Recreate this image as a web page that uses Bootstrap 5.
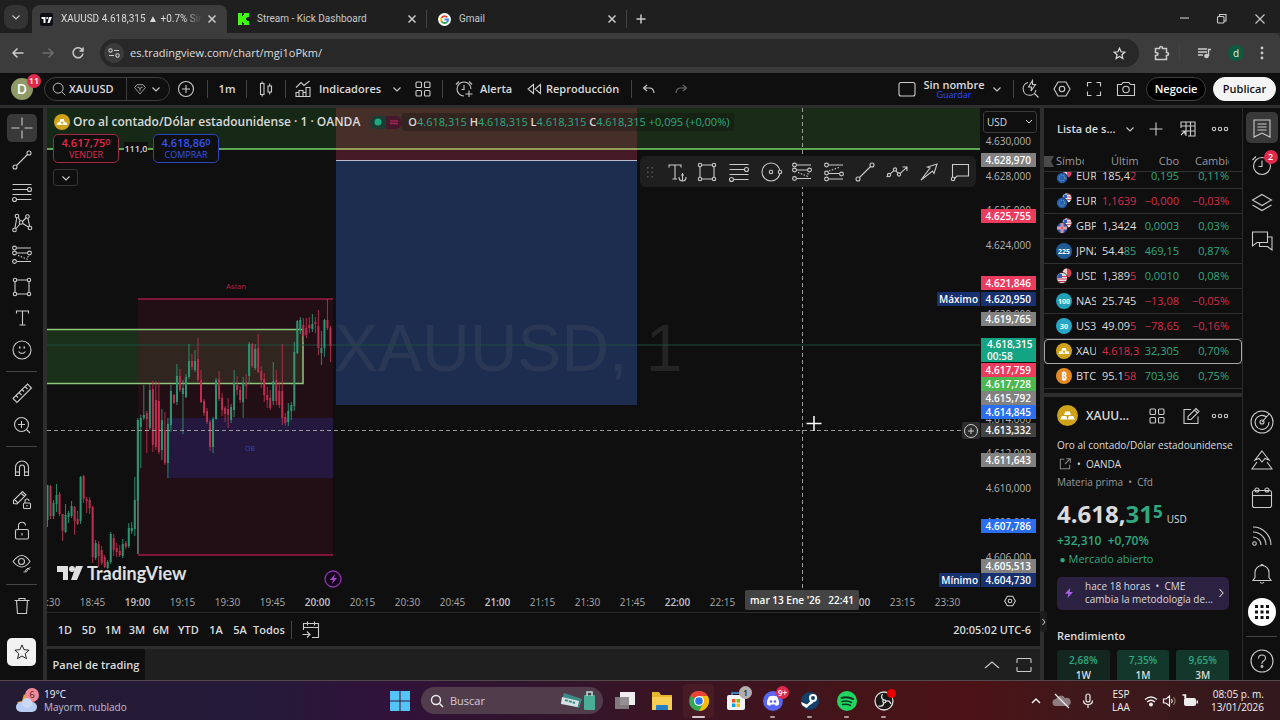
<!DOCTYPE html>
<html lang="es">
<head>
<meta charset="utf-8">
<meta name="viewport" content="width=device-width, initial-scale=1">
<title>XAUUSD 4.618,315 ▲ +0.7% Sin nombre</title>
<link href="https://cdn.jsdelivr.net/npm/bootstrap@5.3.0/dist/css/bootstrap.min.css" rel="stylesheet">
<style>
:root{--bg:#0f0f0f;--gap:#2e2e2e;--line:#2b2b2b;--tx:#dbdbdb;--up:#2fa880;--dn:#d92b4b}
body{font-family:"Open Sans","Noto Sans",sans-serif;font-size:11px;line-height:16px;color:var(--tx);background:var(--gap);height:100vh;overflow:hidden}
button,select,input{font:inherit;color:inherit}
svg{display:block;flex:none}
svg.ic{width:24px;height:24px;fill:none;stroke:#cbcbcb;stroke-width:1.1}
svg.ic20{width:20px}svg.ic14{width:14px}svg.ic16{width:16px}
.muted svg.ic{stroke:#6c6c6c}
.ib,.tb{background:none;border:0;padding:0;display:inline-flex;align-items:center;justify-content:center;flex:none}
.ib{width:32px;height:28px}
.w18{width:18px}.w24{width:24px}.w28{width:28px}.w36{width:36px}.w40{width:40px}.w60{width:60px}
.h22{height:22px}
.vr1{width:1px;height:18px;background:#444;margin:0 5px;flex:none}
a{color:inherit;text-decoration:none}
.fs10{font-size:10px}.fs12{font-size:12px}
/* browser */
.tabs{height:33px;background:#1f1f1f;font-family:Roboto,sans-serif;font-size:10px}
.tabs .tab1{width:195px;height:28px;background:#3c3c3c;border-radius:8px 8px 0 0;padding-left:8px}
.tabs .tab2{width:200px;height:28px;padding-left:11px;color:#c9c9c9}
.tabs .fade1{width:145px;overflow:hidden;white-space:nowrap;-webkit-mask-image:linear-gradient(90deg,#000 88%,transparent)}
.drop{width:24px;height:24px;border-radius:8px;background:#343434}
.x{width:20px;height:20px}
.addr{height:40px;background:#3c3c3c;border-top-right-radius:6px}
.omni{height:28px;border-radius:14px;background:#282828;padding:0 8px 0 4px}
.omni input{background:none;border:0;outline:0;font-size:11px;min-width:0;padding:0;color:#dedede}
.siteinfo{width:20px;height:20px;border-radius:50%;background:#3b3b3b;margin-right:6px}
.user{width:16px;height:16px;border-radius:50%;background:#0c5a40;font-size:10px;color:#e6efe9}
/* top toolbar */
.tvbar{height:32px;background:var(--bg);font-weight:600}
.avatarbox{width:44px}
.avatarD{width:22px;height:22px;border-radius:50%;background:#8f9a66;font-size:14px;color:#fff}
.cnt{position:absolute;background:#e0294b;color:#fff;border-radius:8px;font-size:9px;line-height:14px;height:14px;width:14px;text-align:center;font-weight:600}
.avatarbox .cnt{left:27px;top:-4px}
.rrail .cnt{right:0;top:4px}
.pill{width:126px;height:24px;border:1px solid #3f3f3f;border-radius:12px}
.pill .sym{width:82px;height:22px;border-right:1px solid #3f3f3f;padding-left:4px;justify-content:flex-start}
.tb.t-ind{width:94px;justify-content:start}.tb.t-al{width:74px;justify-content:start}.tb.t-rep{width:104px;justify-content:start}
.btn-neg,.btn-pub{height:24px;border-radius:12px;border:1px solid #3f3f3f;background:#000;color:#fff;width:60px;padding:0;font-weight:600}
.btn-pub{background:#f4f4f4;color:#111;width:63px;border-color:#f4f4f4;margin-left:7px}
.lname{width:62px}
.save{font-size:9px;line-height:9px;color:#2e4cff;font-weight:400}
/* columns */
main{min-height:0;padding-top:3px}
.mid,.plotrow{min-width:0;min-height:0}
.rail{width:43px;background:var(--bg);padding-top:4px}
.grp{display:flex;flex-direction:column;align-items:center}
.grp .ib{flex:1 1 0;width:30px}
.g8{height:254px}.g2{height:64px}.g4{height:127px}
.hr1{height:1px;width:31px;background:#444;margin:5px auto;flex:none}
.on{background:#393939;border-radius:5px}
.rail .on{flex:none;height:28px;margin:2px 0}
.grp .binbtn{flex:none;height:31px}
.grp .starbtn{flex:none;width:29px;height:28px;background:#f2f2f2;border-radius:5px;margin-top:17px}
.starbtn svg.ic{stroke:#111}
.rrail{width:38px;background:var(--bg);border-left:1px solid var(--line);padding-top:4px}
.rrail .ib{width:32px;height:38px;position:relative}
.rrail svg{overflow:visible}
.rrail .on{height:31px;margin-bottom:3px}
.rgap{height:147px}
.apps{width:28px;height:28px;border-radius:50%;background:#fff}
.chart{background:var(--bg);position:relative;overflow:hidden}
.chart>svg{position:absolute;left:0;top:0}
.legend{position:absolute;left:7px;top:4px;height:20px;white-space:nowrap}
.legend h1{font-size:12px;line-height:16px;font-weight:600;margin:0 0 0 3px}
.status{width:32px;height:13px;border-radius:6px;margin-left:10px;background:linear-gradient(90deg,#1c3b33 50%,#46182b 50%)}
.ohlc{font-size:11px;line-height:18px;padding:0 5px 0 6px;color:var(--up);background:#0f0f0f55;border-radius:3px}
.ohlc b{color:var(--tx);font-weight:600}
.trade{position:absolute;left:6px;top:26px}
.trade button{width:66px;height:29px;border-radius:5px;background:var(--bg);border:1px solid #a32842;color:#e0294b;font-size:9px;line-height:11px;padding:0}
.trade button b{font-size:11px;font-weight:600;display:block;line-height:12px}
.trade sup{font-size:9px;top:-2px;line-height:0}
.trade .buy{border-color:#2b45c0;color:#3454f0}
.spread{width:34px;text-align:center;font-size:9px;font-weight:600}
.spread span{background:var(--bg)}
.coll{position:absolute;left:6px;top:61px;width:25px;height:17px;border:1px solid #363636;border-radius:3px}
.fav{position:absolute;right:4px;top:48px;height:31px;width:336px;background:#1f1f1f;border-radius:6px}
.fav .ib{flex:1}
.brand{position:absolute;left:10px;bottom:7px;font:700 18px/20px Lato,sans-serif;color:#e0e0e0}
.paxis{width:60px;background:var(--bg);position:relative;font-size:10px;line-height:14px}
.paxis select{width:54px;height:22px;border:1px solid #3a3a3a;border-radius:3px;background:var(--bg) url("data:image/svg+xml,%3Csvg xmlns='http://www.w3.org/2000/svg' width='8' height='6' fill='none' stroke='%23ddd'%3E%3Cpath d='M1 1l3 3 3-3'/%3E%3C/svg%3E") no-repeat right 3px center;appearance:none;font-size:10px;padding:0 3px;margin:3px 0 0 3px}
.pl{position:absolute;left:1px;width:55px;padding-right:5px;text-align:right;transform:translateY(-50%);color:#b5b5b5}
.pl.tag{color:#fff;font-weight:600}
.pl .lab{position:absolute;right:56px;top:0;padding:0 2px;background:inherit}
.red{background:#ec3b5f}.gry{background:#818181}.navy{background:#17306f}.grn{background:#4bb84f}.blu{background:#2b6ff0}.dark{background:#434343}
.pl.teal{background:#12a483;line-height:12px;text-align:left;padding:0 0 0 6px}
.taxis{height:23px;background:var(--bg);border-bottom:1px solid var(--line);position:relative;font-size:10px;color:#a8a8a8}
.taxis .ticks{overflow:hidden;padding-top:4px}
.taxis .ticks span{width:45px;flex:none;text-align:center}
.taxis .ticks span:first-child{margin-left:-22px}
.taxis .ticks b{font-weight:600;color:#c4c4c4}
.taxis svg{stroke:#ccc;stroke-width:1.6;fill:none}
.when{position:absolute;left:698px;top:0;width:114px;height:20px;line-height:20px;background:#434343;border-radius:2px;color:#fff;font-weight:600;text-align:center;white-space:pre}
.range{height:33px;background:var(--bg);font-weight:600;padding-left:6px}
.range .tb{height:24px;width:24px}.range .tb:nth-child(6){width:31px}.range .tb:nth-child(9){width:34px}
.clock{padding-right:9px}
.panelbar{background:#1f1f1f;margin-top:3px;height:31px}
.panelbar .ptab{width:98px;background:var(--bg);font-weight:600}
.watch{width:198px}
.watch .hd{height:42px;background:var(--bg);padding-left:13px;font-weight:600}
.watch .ttl{width:61px}
.watch .bd{background:var(--bg)}
.watch table{table-layout:fixed;width:198px;margin:0;border-collapse:collapse}
.watch td,.watch th{padding:0;height:25px;overflow:hidden;white-space:nowrap;border-bottom:1px solid #303030;line-height:18px}
.watch th{height:21px;font-weight:400;color:#9a9a9a;padding-top:2px}
.watch th.c2{padding-left:27px}.watch th.c4{padding-left:16px}
.a1{width:12px}.a2{width:28px}.a3{width:54px}.a4{width:41px}.a5{width:50px}
.b1{width:32px}.b2{width:20px}.b3{width:43px}.b4{width:40px}.b5{width:50px}
.watch td:first-child{padding-left:12px}.watch td:nth-child(3){padding-left:6px}
.watch td i{font-style:normal}
.tblclip{overflow:hidden;height:221px}
.tblclip table{margin-top:-8px}
.r{text-align:right}.u{color:var(--up)}.d{color:var(--dn)}
.sel{outline:1px solid #a8a8a8;outline-offset:-1px;border-radius:4px}
.det{background:var(--bg);margin-top:4px;padding:8px 13px 0;overflow:hidden}
.det .nm{font-weight:600;font-size:12px}
.det .ds{margin-top:10px}.det .src{margin-top:3px}.det .knd{margin-top:2px;color:#9a9a9a}
.big{font-size:24px;line-height:28px;font-weight:700;margin-top:10px}
.big sup{font-size:17px;top:-5px;line-height:0}
.big small{font-size:10px;font-weight:400}
.chg{font-weight:600;font-size:12px}
.mkt{margin-top:2px}
.news{background:#2b2140;border-radius:5px;height:33px;line-height:13px;font-size:10px;padding:0 4px;margin-top:10px}
.det h2{font-size:11px;line-height:16px;font-weight:600;margin:18px 0 6px}
.perfs{gap:7px}
.perf{height:40px;border-radius:3px;background:#14372c;text-align:center;font-size:10px;line-height:15px;padding-top:3px;font-weight:600}
.perf.lo{background:#142620}
.hide{position:absolute;left:-4px;bottom:48px;width:7px;height:21px;background:#1c1c1c;border-radius:3px}
/* task bar */
.task{height:40px;border-top:1px solid #54484c;background:linear-gradient(90deg,#231c33 0,#26193a 22%,#31123a 30%,#30152c 42%,#3a1424 52%,#451418 68%,#4c1216 76%,#40181b 84%,#32191d 100%);color:#f1f1f1}
.task .left1{width:30%}
.task svg.ic{stroke:#eee}
.two{font-size:10px;line-height:13px}.two span{color:#c4bccb}
.lang{width:38px}.time{width:64px}
.approw{gap:6px}
.task .search{width:182px;height:27px;border-radius:14px;background:#513c4c;padding:0 6px 0 8px}
.task .search input{background:none;border:0;outline:0;width:90px;font-size:11px;padding:0;margin-left:5px}
.task .search input::placeholder{color:#d5cdd3;opacity:1}
.app{width:31px;height:34px;background:none;border:0;padding:0;display:flex;align-items:center;justify-content:center;position:relative;border-radius:4px}
.app.run::after{content:"";position:absolute;bottom:0;width:5px;height:2px;border-radius:1px;background:#a99}
.app.act{background:#54222a80}.app.act::after{width:13px;background:#d8c8cc}
.app .cnt{right:-1px;top:2px;width:13px;height:13px;line-height:13px;font-size:8px}
.app .one{background:#b3aeb0;color:#222}
.app .rec{background:#e80000;width:9px;height:9px;right:3px;top:5px}
</style>
</head>
<body class="d-flex flex-column">
<svg width="0" height="0" class="position-absolute" aria-hidden="true">
<defs>
<symbol id="chev" viewBox="0 0 24 24"><path d="M8.500 10.500l3.500 3.500 3.500-3.500"/></symbol>
<symbol id="x" viewBox="0 0 24 24"><path d="M8.500 8.500l7 7M15.500 8.500l-7 7" stroke-width="1.500"/></symbol>
<symbol id="plus" viewBox="0 0 24 24"><path d="M12 5.500v13M5.500 12h13"/></symbol>
<symbol id="mag" viewBox="0 0 24 24"><circle cx="11" cy="11" r="6"/><path d="M15.500 15.500l4 4"/></symbol>
<symbol id="pc" viewBox="0 0 24 24"><circle cx="12" cy="12" r="7.500"/><path d="M12 8v8M8 12h8"/></symbol>
<symbol id="dots3" viewBox="0 0 24 24"><circle cx="6" cy="12" r="1.700"/><circle cx="12" cy="12" r="1.700"/><circle cx="18" cy="12" r="1.700"/></symbol>
<symbol id="grid4" viewBox="0 0 24 24"><rect x="5" y="5" width="5.500" height="5.500" rx="1"/><rect x="13.500" y="5" width="5.500" height="5.500" rx="1"/><rect x="5" y="13.500" width="5.500" height="5.500" rx="1"/><rect x="13.500" y="13.500" width="5.500" height="5.500" rx="1"/></symbol>
<symbol id="line" viewBox="0 0 24 24"><circle cx="5" cy="19" r="2"/><circle cx="19" cy="5" r="2"/><path d="M6.500 17.500l11-11"/></symbol>
<symbol id="fib" viewBox="0 0 24 24"><path d="M2.500 4.500h19M2.500 9.500h15M2.500 14.500h19M6.500 19.500h15"/><circle cx="19.500" cy="9.500" r="2" /><circle cx="4.500" cy="19.500" r="2"/></symbol>
<symbol id="pat" viewBox="0 0 24 24"><circle cx="7" cy="5" r="1.800"/><circle cx="17.500" cy="5.500" r="1.800"/><circle cx="4.500" cy="19" r="1.800"/><circle cx="20" cy="17" r="1.800"/><circle cx="11" cy="11.500" r="1.800"/><path d="M6.700 7L5 17M8.300 6.500l2 3.500M12.500 10.500l4-4M17.900 7.300l1.800 8M6 17.500l4-4.500M12.700 12.500l5.700 3.500"/></symbol>
<symbol id="fc" viewBox="0 0 24 24"><circle cx="4.500" cy="5" r="1.900"/><circle cx="4.500" cy="10" r="1.900"/><circle cx="19.500" cy="10" r="1.900"/><circle cx="4.500" cy="18.500" r="1.900"/><path d="M6.500 5h14.500M6.500 10h11M6.500 18.500h14.500"/><path d="M8 12.500l10 4M18 13v3" stroke-dasharray="1.500 1.500"/></symbol>
<symbol id="fc2" viewBox="0 0 24 24"><circle cx="4.500" cy="5" r="1.900"/><circle cx="19.500" cy="14" r="1.900"/><circle cx="4.500" cy="13" r="1.900"/><circle cx="4.500" cy="19" r="1.900"/><path d="M6.500 5h14.500M6.500 13.500h11M6.500 19h14.500"/><path d="M7 11l11-4" stroke-dasharray="1.500 1.500"/></symbol>
<symbol id="rect" viewBox="0 0 24 24"><path d="M6.500 5h11M6.500 19h11M5 6.500v11M19 6.500v11"/><circle cx="5" cy="5" r="1.700"/><circle cx="19" cy="5" r="1.700"/><circle cx="5" cy="19" r="1.700"/><circle cx="19" cy="19" r="1.700"/></symbol>
<symbol id="txt" viewBox="0 0 24 24"><path d="M6.500 7.500v-2.500h12v2.500M12.500 5v14M9.500 19h6"/></symbol>
<symbol id="smile" viewBox="0 0 24 24"><circle cx="12" cy="12" r="9"/><path d="M8.500 13.500q3.500 4 7 0"/><path d="M9 9.500h1.500M13.500 9.500h1.500" stroke-width="1.800"/></symbol>
<symbol id="ruler" viewBox="0 0 24 24"><path d="M3 17.500L17.500 3l4 4L7 21.500zM6 14.500l2 2M9 11.500l2.500 2.500M12 8.500l2 2M15 5.500l2.500 2.500"/></symbol>
<symbol id="zoom" viewBox="0 0 24 24"><circle cx="11.500" cy="11.500" r="7"/><path d="M16.500 16.500l3.500 3.500M11.500 8v7M8 11.500h7"/></symbol>
<symbol id="mgn" viewBox="0 0 24 24"><path d="M5.500 19.500v-8a6.500 6.500 0 0 1 13 0v8h-4v-8a2.500 2.500 0 0 0-5 0v8zM5.500 16h4M14.500 16h4"/></symbol>
<symbol id="plk" viewBox="0 0 24 24"><path d="M3.500 15.500v-3l9-9 3.500 3.500-9 9zM11 5l3.500 3.500M4.500 11.500l3 3"/><rect x="13.500" y="15" width="7" height="5.500" rx="1"/><path d="M15 15v-2a2 2 0 0 1 4 0M17 17v1.500"/></symbol>
<symbol id="lock" viewBox="0 0 24 24"><rect x="5.500" y="10.500" width="13" height="9.500" rx="1.500"/><path d="M8.500 10.500V7a3.500 3.500 0 0 1 7-.5M12 14v2.500"/></symbol>
<symbol id="eye" viewBox="0 0 24 24"><path d="M3 10.500q9-12 17 0-8 11-17 0z"/><circle cx="11.500" cy="10.500" r="3"/><path d="M13.500 21q4 .5 4-2l3-3M15 20l3-3 1.500 1.500" stroke-width="1"/></symbol>
<symbol id="bin" viewBox="0 0 24 24"><path d="M4.500 6.500h15M9 6.500v-2h6v2M6.500 6.500l1 13h9l1-13"/></symbol>
<symbol id="star" viewBox="0 0 24 24"><path d="M12 3.500l2.500 5.700 6 .6-4.600 4.100 1.400 6.100-5.300-3.200-5.300 3.200 1.400-6.100-4.600-4.100 6-.6z"/></symbol>
<symbol id="cross" viewBox="0 0 24 24"><path d="M12 1.500v8M12 14.500v8M1.500 12h8M14.500 12h8"/></symbol>
<symbol id="gem" viewBox="0 0 24 24"><path d="M7.500 5.500h9L20 10l-8 9.500L4 10zM8 9.500h2.500L12 12l1.500-2.500H16M12 12v3"/></symbol>
<symbol id="cndl" viewBox="0 0 24 24"><rect x="6.500" y="6.500" width="3.500" height="11"/><rect x="14" y="9" width="3.500" height="6"/><path d="M8.200 4.500v2M8.200 17.500v2M15.700 6.500v2.500M15.700 15v2.500"/></symbol>
<symbol id="ind" viewBox="0 0 24 24"><path d="M5 19.500v-4h3v-2h4v2h3v-5h4v9zM8 19.500v-4M12 19.500v-4M15 19.500v-4M5 10.500l5-5 3 3 5.500-4.500"/></symbol>
<symbol id="alm" viewBox="0 0 24 24"><path d="M12 19a7 7 0 1 1 7-7M12 8v4.500H9.500M4 7.500L7 4.500M17 4.500l3 3M17 13.500v6.500M13.500 17h7"/></symbol>
<symbol id="rew" viewBox="0 0 24 24"><path d="M11.500 7.500v9L6 12zM18.500 7.500v9L13 12z"/></symbol>
<symbol id="undo" viewBox="0 0 24 24"><path d="M10 8l-3.500 3 3.500 3M6.500 11h6q4 0 4.500 5"/></symbol>
<symbol id="hex" viewBox="0 0 24 24"><path d="M8 5h8l4 7-4 7H8l-4-7z"/><circle cx="12" cy="12" r="2.700"/></symbol>
<symbol id="fs" viewBox="0 0 24 24"><path d="M5.500 9.500v-4h4M14.500 5.500h4v4M18.500 14.500v4h-4M9.500 18.500h-4v-4"/></symbol>
<symbol id="cam" viewBox="0 0 24 24"><path d="M3.500 7.500h4l1.500-2h6l1.500 2h4v11h-17z"/><circle cx="12" cy="12.500" r="3.200"/></symbol>
<symbol id="qs" viewBox="0 0 24 24"><path d="M10 5.500a6.500 6.500 0 1 0 8 7.500M16.500 16.500l4 4M14.500 3.500L10.500 10h3l-.5 4 4.500-6.500h-3z"/></symbol>
<symbol id="alarm" viewBox="0 0 24 24"><circle cx="12" cy="13" r="8.500"/><path d="M12 7.500v6H8.500M2.500 7L6 3.500"/></symbol>
<symbol id="gold" viewBox="0 0 24 24"><circle cx="12" cy="12" r="12" fill="#cfa21a" stroke="none"/><path d="M9.500 7.500h5l1.500 4H8zM5.500 12.500h5l1.500 4H3.700zM13.500 12.500h5l1.800 4H12.500z" fill="#fff" stroke="none"/></symbol>
<symbol id="tbl" viewBox="0 0 24 24"><path d="M5 11V5h14v14h-7M5 9h14M10 5v14M14.500 5v14M10 14h9M5 18l4-4M5.500 14H9v3.500"/></symbol>
<symbol id="edit" viewBox="0 0 24 24"><path d="M12 5.500H5v14h14v-7M9 15.500v-3l8-8 3 3-8 8zM15.500 6l3 3"/></symbol>
<symbol id="cal" viewBox="0 0 24 24"><rect x="2.500" y="4.500" width="19" height="17" rx="2"/><path d="M2.500 9.500h19"/><circle cx="7" cy="4" r="2"/><circle cx="17" cy="4" r="2"/></symbol>
<symbol id="goto" viewBox="0 0 24 24"><path d="M4.500 12V5.500h15v14H13M4.500 9.500h15M8.500 3.500v4M15.500 3.500v4M3.500 16.500h7M8 13.500l3 3-3 3"/></symbol>
<symbol id="bolt" viewBox="0 0 24 24"><path d="M14 4l-8 9h5l-1.500 7 8.500-9.500h-5z" fill="#a860e0" stroke="none"/></symbol>
<symbol id="wave" viewBox="0 0 24 24"><circle cx="4" cy="15" r="1.600"/><circle cx="10" cy="9.500" r="1.600"/><circle cx="14" cy="14.500" r="1.600"/><path d="M1.500 17l1.300-1M5.200 13.800l3.600-3.200M11 10.800l2 2.500M15.200 13.300l6.500-6M17.500 7h4.500v4"/></symbol>
</defs></svg>

<nav class="tabs d-flex align-items-end flex-shrink-0" aria-label="Pestañas">
  <button class="ib drop align-self-center ms-1 me-1" aria-label="Buscar pestañas"><svg class="ic"><use href="#chev"/></svg></button>
  <div class="tab1 d-flex align-items-center">
    <svg width="13" height="13" viewBox="0 0 13 13" class="me-1"><rect width="13" height="13" rx="2" fill="#0c0f18"/><path d="M1.500 4h4v6h-2V6h-2zM9 4h3l-2.500 6H7.500z" fill="#fff"/><circle cx="7.200" cy="5" r="1" fill="#fff"/></svg>
    <span class="fade1 ps-1">XAUUSD 4.618,315 ▲ +0.7% Sin nombre</span>
    <button class="ib x" aria-label="Cerrar"><svg class="ic"><use href="#x"/></svg></button>
  </div>
  <div class="tab2 d-flex align-items-center">
    <svg width="11" height="12" viewBox="0 0 11 12" class="me-2"><path d="M0 0h4v3h1V2h1V0h5v4H9v1H8v2h1v1h2v4H6v-2H5V9H4v3H0z" fill="#3fff10"/></svg>
    <span class="flex-fill">Stream - Kick Dashboard</span>
    <button class="ib x me-1" aria-label="Cerrar"><svg class="ic"><use href="#x"/></svg></button><i class="vr1 m-0"></i>
  </div>
  <div class="tab2 d-flex align-items-center">
    <svg width="13" height="13" viewBox="0 0 24 24" class="me-2"><circle cx="12" cy="12" r="12" fill="#fff"/><g fill="none" stroke-width="3.500"><path d="M17 8a6.500 6.500 0 0 0-10.500 1" stroke="#ea4335"/><path d="M6.500 9a6.500 6.500 0 0 0 0 6" stroke="#fbbc05"/><path d="M6.500 15a6.500 6.500 0 0 0 10 2" stroke="#34a853"/><path d="M16.500 17a6.500 6.500 0 0 0 2-5H12" stroke="#4285f4"/></g></svg>
    <span class="flex-fill">Gmail</span>
    <button class="ib x me-1" aria-label="Cerrar"><svg class="ic"><use href="#x"/></svg></button><i class="vr1 m-0"></i>
  </div>
  <button class="ib w28" aria-label="Nueva pestaña"><svg class="ic"><path d="M12 7.500v9M7.500 12h9" stroke-width="1.500"/></svg></button>
  <div class="ms-auto d-flex">
    <button class="ib w40" aria-label="Minimizar"><svg class="ic"><path d="M8 11h9"/></svg></button>
    <button class="ib w36" aria-label="Restaurar"><svg class="ic"><rect x="7.500" y="9.500" width="6.500" height="6.500" rx="1"/><path d="M9.500 9.500V7.500h6.500V14h-2"/></svg></button>
    <button class="ib w40" aria-label="Cerrar ventana"><svg class="ic"><path d="M7.500 7.500l9 9M16.500 7.500l-9 9"/></svg></button>
  </div>
</nav>

<div class="addr d-flex align-items-center flex-shrink-0">
  <button class="ib ms-1 w28" aria-label="Atrás"><svg class="ic"><path d="M17.500 12H7M11.500 7.500L7 12l4.500 4.500" stroke-width="1.500"/></svg></button>
  <button class="ib muted" aria-label="Adelante"><svg class="ic"><path d="M6.500 12H17M12.500 7.500L17 12l-4.500 4.500" stroke-width="1.500"/></svg></button>
  <button class="ib w28" aria-label="Recargar"><svg class="ic"><path d="M16.500 9.500a5 5 0 1 0 .5 3M17 6.500v3.500h-3.500" stroke-width="1.500"/></svg></button>
  <div class="omni d-flex align-items-center flex-fill ms-2">
    <span class="siteinfo d-flex justify-content-center align-items-center"><svg class="ic ic20" viewBox="0 0 20 24"><circle cx="6.500" cy="9.500" r="1.700"/><path d="M10 9.500h5M5 14.500h5"/><circle cx="13.500" cy="14.500" r="1.700"/></svg></span>
    <input class="flex-fill" aria-label="Dirección" value="es.tradingview.com/chart/mgi1oPkm/">
    <button class="ib w24" aria-label="Favorito"><svg width="15" height="15" viewBox="0 0 24 24" fill="none" stroke="currentColor" stroke-width="2"><use href="#star"/></svg></button>
  </div>
  <button class="ib ms-1 w36" aria-label="Extensiones"><svg class="ic"><path d="M6.500 7.500h4q0-2 1.500-2t1.500 2h4v4q2 0 2 1.500t-2 1.500v4h-11v-4q2.500 0 2.500-1.500T6.500 11.500z" stroke-width="1.500"/></svg></button>
  <i class="vr1 mx-0"></i>
  <button class="ib ms-1 me-1 w40" aria-label="Multimedia"><svg class="ic"><path d="M6 8h9M6 11h9M6 14h5" stroke-width="1.400"/><circle cx="14.500" cy="15" r="1.800" fill="#cbcbcb"/><path d="M16.500 15V8.500h2.500" stroke-width="1.400"/></svg></button>
  <span class="user d-flex align-items-center justify-content-center">d</span>
  <button class="ib w36" aria-label="Menú"><svg class="ic"><g fill="#cbcbcb" stroke="none"><circle cx="12" cy="7" r="1.400"/><circle cx="12" cy="12" r="1.400"/><circle cx="12" cy="17" r="1.400"/></g></svg></button>
</div>

<header class="tvbar d-flex align-items-center flex-shrink-0">
  <div class="avatarbox position-relative d-flex justify-content-center"><span class="avatarD d-flex align-items-center justify-content-center">D</span><span class="cnt">11</span></div>
  <div class="pill d-flex align-items-center"><button class="tb sym"><svg class="ic ic20"><use href="#mag"/></svg>XAUUSD</button><button class="tb flex-fill" aria-label="Favoritos"><svg class="ic ic16"><use href="#gem"/></svg><svg class="ic ic16" viewBox="4 0 16 24"><path d="M8.500 10.500l3.500 3.500 3.500-3.500"/></svg></button></div>
  <button class="ib" aria-label="Comparar"><svg class="ic"><use href="#pc"/></svg></button><i class="vr1"></i>
  <button class="tb w28">1m</button><i class="vr1"></i>
  <button class="ib w28" aria-label="Velas"><svg class="ic"><use href="#cndl"/></svg></button><i class="vr1"></i>
  <button class="tb t-ind"><svg class="ic me-1"><use href="#ind"/></svg>Indicadores</button>
  <button class="ib w24" aria-label="Plantillas"><svg class="ic"><use href="#chev"/></svg></button>
  <button class="ib w28" aria-label="Diseño"><svg class="ic"><use href="#grid4"/></svg></button><i class="vr1"></i>
  <button class="tb t-al ps-1"><svg class="ic me-1"><use href="#alm"/></svg>Alerta</button>
  <button class="tb t-rep"><svg class="ic"><use href="#rew"/></svg>Reproducción</button><i class="vr1"></i>
  <button class="ib w24" aria-label="Deshacer"><svg class="ic"><use href="#undo"/></svg></button>
  <button class="ib w40 muted" aria-label="Rehacer"><svg class="ic"><path d="M14 8l3.500 3-3.500 3M17.500 11h-6q-4 0-4.500 5"/></svg></button>
  <div class="ms-auto d-flex align-items-center pe-1">
    <button class="ib" aria-label="Diseño del gráfico"><svg class="ic"><rect x="4" y="5.500" width="16" height="13.500" rx="2"/></svg></button>
    <div class="text-center lh-1 lname"><div>Sin nombre</div><a href="#" class="save d-block">Guardar</a></div>
    <button class="ib w24" aria-label="Administrar"><svg class="ic"><use href="#chev"/></svg></button><i class="vr1 ms-1 me-0"></i>
    <button class="ib" aria-label="Búsqueda rápida"><svg class="ic"><use href="#qs"/></svg></button>
    <button class="ib" aria-label="Configuración"><svg class="ic"><use href="#hex"/></svg></button>
    <button class="ib" aria-label="Pantalla completa"><svg class="ic"><use href="#fs"/></svg></button>
    <button class="ib me-1" aria-label="Captura"><svg class="ic"><use href="#cam"/></svg></button>
    <button class="btn-neg">Negocie</button><button class="btn-pub">Publicar</button>
  </div>
</header>

<main class="d-flex flex-fill overflow-hidden">
  <aside class="rail flex-shrink-0" aria-label="Herramientas de dibujo">
    <div class="grp g8">
      <button class="ib on" aria-label="Cruz"><svg class="ic"><use href="#cross"/></svg></button>
      <button class="ib" aria-label="Línea"><svg class="ic"><use href="#line"/></svg></button>
      <button class="ib" aria-label="Fibonacci"><svg class="ic"><use href="#fib"/></svg></button>
      <button class="ib" aria-label="Patrones"><svg class="ic"><use href="#pat"/></svg></button>
      <button class="ib" aria-label="Previsión"><svg class="ic"><use href="#fc"/></svg></button>
      <button class="ib" aria-label="Rectángulo"><svg class="ic"><use href="#rect"/></svg></button>
      <button class="ib" aria-label="Texto"><svg class="ic"><use href="#txt"/></svg></button>
      <button class="ib" aria-label="Iconos"><svg class="ic"><use href="#smile"/></svg></button>
    </div><div class="hr1"></div>
    <div class="grp g2">
      <button class="ib" aria-label="Medir"><svg class="ic"><use href="#ruler"/></svg></button>
      <button class="ib" aria-label="Acercar"><svg class="ic"><use href="#zoom"/></svg></button>
    </div><div class="hr1"></div>
    <div class="grp g4">
      <button class="ib" aria-label="Imán"><svg class="ic"><use href="#mgn"/></svg></button>
      <button class="ib" aria-label="Mantener dibujo"><svg class="ic"><use href="#plk"/></svg></button>
      <button class="ib" aria-label="Bloquear"><svg class="ic"><use href="#lock"/></svg></button>
      <button class="ib" aria-label="Ocultar"><svg class="ic"><use href="#eye"/></svg></button>
    </div><div class="hr1"></div>
    <div class="grp">
      <button class="ib binbtn" aria-label="Eliminar"><svg class="ic"><use href="#bin"/></svg></button>
      <button class="ib starbtn" aria-label="Favoritos"><svg class="ic ic20"><use href="#star"/></svg></button>
    </div>
  </aside>

  <section class="mid d-flex flex-column flex-fill ms-1">
    <div class="plotrow d-flex flex-fill">
      <div class="chart flex-fill">
        <svg width="1600" height="700" viewBox="47 108 1600 700" id="plot">
          <text x="334" y="371" font-size="66" fill="#242424" font-family="Liberation Sans,sans-serif">XAUUSD, 1</text>
          <rect x="47" y="108" width="289" height="41" fill="#162916"/>
          <rect x="637" y="108" width="343" height="41" fill="#1a2c17"/>
          <rect x="336" y="108" width="301" height="41" fill="#462f29"/>
          <rect x="336" y="149" width="301" height="11" fill="#451925"/>
          <rect x="336" y="161" width="301" height="244" fill="#1c2d50"/>
          <path d="M336 160.500h301" stroke="#b9bccb"/>
          <path d="M47 149h933" stroke="#7cd46e" stroke-width="1.500"/><path d="M336 149h301" stroke="#a09a5a" stroke-width="1.500"/>
          <rect x="138" y="299" width="195" height="256" fill="#220e15"/>
          <rect x="47" y="330" width="91" height="53" fill="#1a3018"/><rect x="138" y="330" width="165" height="53" fill="#30261f"/>
          <rect x="168" y="418" width="165" height="60" fill="#24183f"/>
          <text x="334" y="371" font-size="66" fill="#808080" fill-opacity=".14" font-family="Liberation Sans,sans-serif" clip-path="url(#bx)">XAUUSD, 1</text>
          <clipPath id="bx"><rect x="336" y="161" width="301" height="244"/></clipPath>
          <path d="M138 299h195M138 555h195" stroke="#a3184a" stroke-width="1.500"/>
          <path d="M47 329.500h256v54H47" fill="none" stroke="#8fc77e" stroke-width="1.500"/>
          <path d="M47 345h933" stroke="#1d4c3c"/>
          <path d="M138 420v134" stroke="#b9a7a2" stroke-width=".8"/>
          <g id="candles"></g>
          <text x="236" y="289" font-size="8" text-anchor="middle" fill="#b3204f">Asian</text>
          <text x="250" y="451" font-size="7" text-anchor="middle" fill="#3346cc">OB</text>
          <path d="M47 430.500h914M802.500 108v482" stroke="#999" stroke-dasharray="4 3" fill="none"/>
          <path d="M814 416v15M806.500 423.500h15" stroke="#fff" stroke-width="1.500"/>
          <circle cx="333" cy="579" r="8" fill="#16081c" stroke="#8e35b0" stroke-width="1.300"/><path d="M335 574l-5 6h3l-1 4 5-6h-3z" fill="#a948cf"/>
          <rect x="962" y="422" width="18" height="17" rx="2" fill="#2c2c2c"/><g stroke="#ccc" fill="none"><circle cx="971" cy="431" r="6.500"/><path d="M971 428v6M968 431h6"/></g>
        </svg>
        <div class="legend d-flex align-items-center"><svg width="16" height="16"><use href="#gold"/></svg><h1>Oro al contado/Dólar estadounidense · 1 · OANDA</h1>
          <span class="status d-flex align-items-center justify-content-around"><svg width="8" height="8"><circle cx="4" cy="4" r="3.500" fill="#20a67c"/></svg><svg width="8" height="8" stroke="#a02558" stroke-width="1.300"><path d="M0 3h8M0 5.500h8"/></svg></span>
          <span class="ohlc"><b>O</b>4.618,315 <b>H</b>4.618,315 <b>L</b>4.618,315 <b>C</b>4.618,315 +0,095 (+0,00%)</span></div>
        <div class="trade d-flex align-items-center"><button><b>4.617,75<sup>0</sup></b>VENDER</button><span class="spread"><span>111,0</span></span><button class="buy"><b>4.618,86<sup>0</sup></b>COMPRAR</button></div>
        <button class="coll ib" aria-label="Contraer"><svg class="ic"><use href="#chev"/></svg></button>
        <div class="fav d-flex align-items-center">
          <svg width="20" height="24" viewBox="0 0 20 24" fill="#555"><path d="M7 7h1.500v1.500H7zM11.500 7H13v1.500h-1.500zM7 11.500h1.500V13H7zM11.500 11.500H13V13h-1.500zM7 16h1.500v1.500H7zM11.500 16H13v1.500h-1.500z"/></svg>
          <button class="ib" aria-label="Texto anclado"><svg class="ic"><path d="M5 7.500V5h12v2.500M11 5v14M8.500 19H13M18.500 13v8M15 17q0 4 3.500 4t3.500-4M17 15h3"/></svg></button>
          <button class="ib" aria-label="Rectángulo"><svg class="ic"><use href="#rect"/></svg></button>
          <button class="ib" aria-label="Fibonacci"><svg class="ic"><use href="#fib"/></svg></button>
          <button class="ib" aria-label="Círculo"><svg class="ic"><circle cx="12" cy="12" r="9"/><circle cx="12" cy="12" r="1.700"/><circle cx="21" cy="12" r="1.700" fill="#1f1f1f"/></svg></button>
          <button class="ib" aria-label="Posición larga"><svg class="ic"><use href="#fc"/></svg></button>
          <button class="ib" aria-label="Posición corta"><svg class="ic"><use href="#fc2"/></svg></button>
          <button class="ib" aria-label="Línea"><svg class="ic"><use href="#line"/></svg></button>
          <button class="ib" aria-label="Trazado"><svg class="ic"><use href="#wave"/></svg></button>
          <button class="ib" aria-label="Flecha"><svg class="ic"><path d="M4 20l9-12-2.500-1L20 4l-3 9.500-1.500-2.500z"/></svg></button>
          <button class="ib" aria-label="Comentario"><svg class="ic"><path d="M4.500 17V4.500h16v11.500H9l-3 3"/><circle cx="5" cy="19" r="1.700"/></svg></button>
        </div>
        <div class="brand d-flex align-items-center"><svg width="26" height="14" viewBox="0 0 26 14" fill="#e0e0e0" class="me-1"><path d="M0 0h11v14H6V6H0zM19 0h7l-6 14h-6z"/><circle cx="15" cy="3" r="3"/></svg>TradingView</div>
      </div>
      <div class="paxis flex-shrink-0" id="paxis"><select aria-label="Moneda"><option>USD</option></select></div>
    </div>
    <div class="taxis d-flex flex-shrink-0"><div class="ticks d-flex flex-fill" id="ticks"></div><div class="when">mar 13 Ene '26   22:41</div><button class="ib w60 h22" aria-label="Ajustes"><svg width="16" height="16" viewBox="0 0 24 24"><use href="#hex"/></svg></button></div>
    <div class="range d-flex align-items-center flex-shrink-0">
      <button class="tb">1D</button><button class="tb">5D</button><button class="tb">1M</button><button class="tb">3M</button><button class="tb">6M</button><button class="tb">YTD</button><button class="tb">1A</button><button class="tb">5A</button><button class="tb">Todos</button>
      <i class="vr1"></i><button class="ib w28" aria-label="Ir a"><svg class="ic"><use href="#goto"/></svg></button><span class="ms-auto clock">20:05:02 UTC-6</span>
    </div>
    <div class="panelbar d-flex flex-shrink-0"><button class="tb ptab">Panel de trading</button>
      <div class="ms-auto d-flex align-items-center"><button class="ib" aria-label="Abrir"><svg class="ic"><path d="M5 15l7-6 7 6"/></svg></button><button class="ib" aria-label="Maximizar"><svg class="ic"><path d="M5 10V6.500q0-1 1-1h12q1 0 1 1V10M5 14v3.500q0 1 1 1h12q1 0 1-1V14"/></svg></button></div></div>
  </section>

  <aside class="watch d-flex flex-column ms-1 flex-shrink-0 position-relative">
    <div class="hd d-flex align-items-center flex-shrink-0"><span class="ttl">Lista de s...</span><button class="ib w24" aria-label="Listas"><svg class="ic"><use href="#chev"/></svg></button><button class="ib w28" aria-label="Añadir"><svg class="ic"><use href="#plus"/></svg></button><button class="ib w36" aria-label="Tabla"><svg class="ic"><use href="#tbl"/></svg></button><button class="ib w28" aria-label="Más"><svg class="ic"><use href="#dots3"/></svg></button></div>
    <div class="bd flex-shrink-0">
      <table><colgroup><col class="a1"><col class="a2"><col class="a3"><col class="a4"><col class="a5"><col></colgroup><thead><tr><th><svg width="10" height="11"><path d="M0 0h10L7 5.500 10 11H0z" fill="#4a4a4a"/></svg></th><th>Símbolo</th><th class="c2">Último</th><th class="r">Cbo</th><th class="c4">Cambio%</th><th></th></tr></thead></table>
      <div class="tblclip"><table><colgroup><col class="b1"><col class="b2"><col class="b3"><col class="b4"><col class="b5"><col></colgroup><tbody id="rows"></tbody></table></div>
    </div>
    <div class="det flex-fill">
      <div class="d-flex align-items-center"><svg width="21" height="21"><use href="#gold"/></svg><span class="nm ms-1 ps-1 flex-fill">XAUU...</span><button class="ib w28 h22" aria-label="Widgets"><svg class="ic"><use href="#grid4"/></svg></button><button class="ib h22 w40" aria-label="Nota"><svg class="ic"><use href="#edit"/></svg></button><button class="ib w18 h22" aria-label="Más"><svg class="ic"><use href="#dots3"/></svg></button></div>
      <div class="text-nowrap fs10 ds">Oro al contado/Dólar estadounidense</div>
      <div class="d-flex align-items-center fs10 src"><svg width="16" height="16" viewBox="0 0 24 24" fill="none" stroke="#888" stroke-width="1.600"><path d="M11 5H5v14h14v-6M14 4h6v6M20 4l-8 8"/></svg><span class="ms-1">• &nbsp;OANDA</span></div>
      <div class="fs10 knd">Materia prima &nbsp;• &nbsp;Cfd</div>
      <div class="big text-nowrap">4.618,<span class="u">31<sup>5</sup></span><small class="ms-1">USD</small></div>
      <div class="u chg">+32,310 &nbsp;+0,70%</div>
      <div class="u mkt"><span class="fs10">&nbsp;●</span> Mercado abierto</div>
      <div class="news d-flex align-items-center"><svg width="16" height="16"><use href="#bolt"/></svg><div class="flex-fill ps-1 ms-1 text-nowrap">hace 18 horas &nbsp;• &nbsp;CME<br>cambia la metodología de...</div><svg class="ic ic16" viewBox="4 0 16 24"><path d="M10.500 8l3.500 4-3.500 4"/></svg></div>
      <h2>Rendimiento</h2>
      <div class="d-flex perfs"><div class="perf lo flex-fill"><span class="u">2,68%</span><br>1W</div><div class="perf flex-fill"><span class="u">7,35%</span><br>1M</div><div class="perf flex-fill"><span class="u">9,65%</span><br>3M</div></div>
    </div>
    <button class="ib hide" aria-label="Ocultar panel"><svg width="6" height="8" fill="none" stroke="#ccc"><path d="M1.500 1l2.500 3-2.500 3"/></svg></button>
  </aside>

  <aside class="rrail d-flex flex-column align-items-center flex-shrink-0">
    <button class="ib on" aria-label="Lista"><svg class="ic"><path d="M4 4h16v17l-8-4-8 4zM7.500 8h9M7.500 11h9M7.500 14h9"/></svg></button>
    <button class="ib" aria-label="Alertas"><svg class="ic"><use href="#alarm"/></svg><span class="cnt">2</span></button>
    <button class="ib" aria-label="Objetos"><svg class="ic"><path d="M12 3.500l9.500 5.500-9.500 5.500L2.500 9zM2.500 14l9.500 5.500 9.500-5.500"/></svg></button>
    <button class="ib" aria-label="Chat"><svg class="ic"><path d="M2.500 17V3h15v10.500H7zM17.500 8H22v13l-4.500-3.500h-8v-4"/></svg></button>
    <div class="rgap"></div>
    <button class="ib" aria-label="Screener"><svg class="ic"><circle cx="12" cy="12" r="11"/><path d="M16.500 7A7 7 0 1 0 19 12M12 12l7-8"/><circle cx="12" cy="12" r="2"/></svg></button>
    <button class="ib" aria-label="Pine"><svg class="ic"><path d="M12 3l7 9-4-1.500-3 3.500-3-3.500L5 12zM7 14l-5 7h20l-5-7"/></svg></button>
    <button class="ib" aria-label="Calendario"><svg class="ic"><use href="#cal"/></svg></button>
    <button class="ib" aria-label="Ideas"><svg class="ic"><circle cx="4.500" cy="19.500" r="1.800"/><path d="M3 13a8 8 0 0 1 8 8M3 8a13 13 0 0 1 13 13M3 3a18 18 0 0 1 18 18"/></svg></button>
    <button class="ib" aria-label="Notificaciones"><svg class="ic"><path d="M3 18.500h18l-2-3v-5a7 7 0 0 0-14 0v5zM10 20q2 2.500 4 0M10.500 3.500q1.500-2 3 0"/></svg></button>
    <button class="ib" aria-label="Productos"><span class="apps d-flex"><svg width="16" height="16" class="m-auto" fill="#111"><path d="M1 1h3v3H1zM6.500 1h3v3h-3zM12 1h3v3h-3zM1 6.500h3v3H1zM6.500 6.500h3v3h-3zM12 6.500h3v3h-3zM1 12h3v3H1zM6.500 12h3v3h-3zM12 12h3v3h-3z"/></svg></span></button>
    <div class="hr1"></div>
    <button class="ib" aria-label="Ayuda"><svg class="ic"><circle cx="12" cy="12" r="11"/><path d="M8.500 9.500q0-3.500 3.500-3.500t3.500 3q0 2-2 3T12 15"/><circle cx="12" cy="17.500" r=".9"/></svg></button>
  </aside>
</main>

<footer class="task d-flex align-items-center flex-shrink-0">
  <div class="left1 d-flex align-items-center ps-3">
    <svg width="24" height="26" viewBox="0 0 24 26"><path d="M1 14l5-1 2-7 4 4 6 1-3 7-9 1z" fill="#eba23c"/><circle cx="16" cy="7" r="7" fill="#f0899a"/><rect x="0" y="14" width="21" height="10" rx="5" fill="#b9cdf2"/><circle cx="11" cy="15" r="5" fill="#c9d8f5"/><text x="16" y="10" font-size="9" text-anchor="middle" fill="#421">6</text></svg>
    <div class="ms-1 two">19°C<br><span>Mayorm. nublado</span></div>
  </div>
  <div class="d-flex align-items-center approw">
    <button class="app" aria-label="Inicio"><svg width="20" height="20" fill="#54c3f6"><path d="M0 0h9.500v9.500H0zM10.500 0H20v9.500h-9.500zM0 10.500h9.500V20H0zM10.500 10.500H20V20h-9.500z"/></svg></button>
    <label class="search d-flex align-items-center"><svg width="16" height="16" fill="none" stroke="#eee" stroke-width="1.400"><circle cx="7" cy="7" r="4.500"/><path d="M10.500 10.500L14 14"/></svg><input placeholder="Buscar" aria-label="Buscar"><svg class="ms-auto" width="36" height="20" viewBox="0 0 36 20"><path d="M3 2l18 6-3 9L0 12z" fill="#3d8b86"/><path d="M1 6l17 4-1.500 6L0 13z" fill="#d6e3e3"/><path d="M4 9l10 3" stroke="#3d8b86" stroke-width="2" stroke-dasharray="3 1"/><rect x="23" y="4" width="11" height="15" rx="1" fill="#4aae96"/><path d="M26 5V1h5v4" fill="none" stroke="#bfe0d6" stroke-width="1.500"/></svg></label>
    <button class="app" aria-label="Vista de tareas"><svg width="20" height="20"><rect x="5" y="1" width="15" height="13" fill="#eee"/><rect x="0" y="6" width="14" height="12" fill="#8a8486" opacity=".9"/></svg></button>
    <button class="app" aria-label="Explorador"><svg width="20" height="20"><path d="M0 1h7l2 3h11v15H0z" fill="#e8b52e"/><path d="M0 6h20v13H0z" fill="#f7ce54"/><path d="M4 19v-4q0-1 1-1h10q1 0 1 1v4z" fill="#2380c8"/></svg></button>
    <button class="app run act" aria-label="Chrome"><svg width="20" height="20" viewBox="0 0 20 20"><circle cx="10" cy="10" r="10" fill="#34a853"/><path d="M10 10L1.300 5A10 10 0 0 1 18.700 5z" fill="#ea4335"/><path d="M10 5h8.700A10 10 0 0 1 10 20l4.500-8z" fill="#fbbc05"/><circle cx="10" cy="10" r="5" fill="#fff"/><circle cx="10" cy="10" r="3.800" fill="#2a73e8"/></svg></button>
    <button class="app" aria-label="Store"><svg width="20" height="20"><path d="M6 5V2h8v3" fill="none" stroke="#3aa0e8" stroke-width="1.500"/><rect x="1" y="4" width="18" height="15" rx="2" fill="#f3f3f3"/><path d="M6 8h3.500v3.500H6z" fill="#f25022"/><path d="M10.500 8H14v3.500h-3.500z" fill="#7fba00"/><path d="M6 12.500h3.500V16H6z" fill="#00a4ef"/><path d="M10.500 12.500H14V16h-3.500z" fill="#ffb900"/></svg><span class="cnt one">1</span></button>
    <button class="app run" aria-label="Discord"><svg width="20" height="20"><circle cx="10" cy="10" r="10" fill="#5865f2"/><path d="M6 5.500q4-1.500 8 0 2.500 4 2 8l-3 1.500-1-1.500H8L7 15l-3-1.500q-.5-4 2-8z" fill="#fff"/><circle cx="8" cy="10.500" r="1.300" fill="#5865f2"/><circle cx="12" cy="10.500" r="1.300" fill="#5865f2"/></svg><span class="cnt">9+</span></button>
    <button class="app run" aria-label="Steam"><svg width="20" height="20"><circle cx="10" cy="10" r="9" fill="#14406c"/><circle cx="13" cy="7" r="4" fill="#fff"/><circle cx="13" cy="7" r="2" fill="#14406c"/><path d="M1 11l6 2.500 4-4 2.500 2-5 3.500q-1 2.500-3 1.500L2 14z" fill="#fff"/></svg></button>
    <button class="app run" aria-label="Spotify"><svg width="20" height="20" fill="none" stroke="#132" stroke-linecap="round"><circle cx="10" cy="10" r="10" fill="#1ed760" stroke="none"/><path d="M4.500 7q6-2 11.500 1" stroke-width="2"/><path d="M5 10.500q5-1.500 9.500 1M5.500 13.500q4-1 8 1" stroke-width="1.500"/></svg></button>
    <button class="app run" aria-label="OBS"><svg width="20" height="20" fill="none" stroke="#ddd" stroke-width="1.300"><circle cx="10" cy="10" r="9" fill="#181818"/><path d="M10 9q-4-2-1.500-6M9.500 11.500q.5 4.500-5 3.500M11.500 10.500q4-2 5.500 2.500"/><circle cx="10.300" cy="10.300" r="1.500"/></svg><span class="cnt rec"></span></button>
  </div>
  <div class="ms-auto d-flex align-items-center pe-3">
    <button class="ib w28" aria-label="Iconos ocultos"><svg class="ic"><path d="M8 14l4-4 4 4" stroke-width="1.500"/></svg></button>
    <svg width="24" height="16" viewBox="0 0 24 16"><path d="M6 13a3.500 3.500 0 0 1 0-7 5 5 0 0 1 9-1 4 4 0 0 1 3 8z" fill="#8d7d80"/><path d="M5 1l14 14" stroke="#eee" stroke-width="1.300"/></svg>
    <svg width="28" height="16" viewBox="0 0 28 16" fill="none" stroke="#eee" stroke-width="1.200"><rect x="12" y="1" width="4" height="8" rx="2"/><path d="M9.500 7.500q0 4 4.500 4t4.500-4M14 11.500V15"/></svg>
    <div class="text-center two lang">ESP<br>LAA</div>
    <svg width="20" height="16" viewBox="0 0 20 16" fill="none" stroke="#eee" stroke-width="1.300"><path d="M5 6.500q6-5 12 0M7 9q4-3.500 8 0"/><circle cx="11" cy="11.500" r="1.300" fill="#eee"/></svg>
    <svg width="20" height="16" viewBox="0 0 20 16" fill="none" stroke="#eee" stroke-width="1.200"><path d="M3.500 6v4H6l3.500 3V3L6 6zM11.500 6q1.500 2 0 4"/><path d="M13.500 4q3 4 0 8" stroke="#876"/></svg>
    <svg width="20" height="16" viewBox="0 0 20 16"><rect x="4" y="5" width="12" height="8" rx="2" fill="#eee"/><rect x="16.500" y="7.500" width="1.500" height="3" fill="#eee"/><path d="M5 2v3M2.500 2h3v4" stroke="#eee" stroke-width="1.500" fill="none"/></svg>
    <div class="text-end text-nowrap two time">08:05 p. m.<br>13/01/2026</div>
  </div>
</footer>

<script>
// candles: high, body top, body bottom, low, direction; one per minute, 3px apart
const C=`485 485 520 527 g|485 486 516 519 r|500 503 516 519 g|484 495 504 512 g|492 494 514 516 r|514 514 531 541 r|504 515 532 533 g|511 513 517 523 g|501 506 516 518 g|506 507 521 535 r|511 519 524 525 r|476 477 521 524 g|475 476 499 503 r|497 499 501 513 r|497 500 508 514 r|506 507 557 563 r|540 543 558 560 g|541 544 556 567 r|546 550 563 565 r|555 557 567 568 r|560 562 568 569 g|532 534 562 564 g|534 538 550 556 r|543 548 552 557 r|545 551 555 557 r|539 544 556 558 g|541 543 547 549 r|523 528 546 548 g|522 528 531 534 g|477 500 529 536 g|418 420 501 554 g|415 418 427 468 g|385 415 418 420 g|411 413 419 453 r|384 390 428 430 g|381 389 445 452 r|381 400 447 450 r|382 401 452 454 r|409 420 450 460 g|412 430 463 465 r|418 424 463 478 g|385 391 425 432 g|394 395 403 404 r|364 376 402 405 g|369 376 390 392 r|380 388 394 434 g|374 377 397 398 g|344 361 377 379 g|354 361 367 370 r|350 361 370 372 g|338 359 380 382 r|370 380 402 403 r|399 401 413 416 r|408 411 422 424 r|420 422 447 451 r|417 419 447 453 g|378 380 419 420 g|371 379 399 401 r|393 398 410 416 r|406 408 414 422 r|398 409 415 428 r|404 407 420 423 g|370 383 410 417 g|376 385 390 395 r|386 390 400 403 r|377 383 402 418 g|374 383 386 399 r|342 344 376 384 g|343 344 366 368 r|344 349 368 370 g|334 348 372 373 r|366 371 380 388 r|373 379 395 402 r|387 395 400 408 r|390 398 408 410 r|362 381 401 405 g|370 380 401 405 r|382 391 405 408 r|344 391 418 425 r|413 417 423 426 r|403 411 422 426 g|402 405 411 420 g|342 352 406 411 g|320 321 353 354 g|317 320 330 334 g|318 325 336 342 r|318 328 335 338 r|317 325 328 333 r|314 324 329 332 g|317 322 324 333 r|310 326 348 355 r|331 348 353 365 g|319 320 348 357 g|299 320 328 330 r|326 328 346 362 r`.split('|');
document.getElementById('candles').innerHTML=C.map((s,i)=>{const[h,t,b,l,d]=s.split(' '),x=47.5+i*3.01,c=d=='g'?'#2c9673':'#bd2f4e';return `<path d="M${x} ${h}V${l}" stroke="${c}" stroke-width=".9"/><rect x="${x-1}" y="${t}" width="2" height="${b-t}" fill="${c}"/>`}).join('');
// price scale: text, y, colour class, side label
[['4.630,000',141],['4.628,000',176],['4.626,000',210],['4.624,000',245],['4.620,000',314],['4.614,000',419],['4.612,000',453],['4.610,000',488],['4.608,000',522],['4.606,000',557],
['4.628,970',160,'gry'],['4.625,755',216,'red'],['4.621,846',283,'red'],['4.619,765',319,'gry'],['4.620,950',299,'navy','Máximo'],['4.618,315<br>00:58',350,'teal'],['4.617,759',370,'red'],['4.617,728',384,'grn'],['4.615,792',398,'gry'],['4.614,845',412,'blu'],['4.613,332',430,'dark'],['4.611,643',460,'gry'],['4.607,786',526,'blu'],['4.605,513',566,'gry'],['4.604,730',580,'navy','Mínimo']]
.forEach(([t,y,c,s])=>document.getElementById('paxis').insertAdjacentHTML('beforeend',`<div class="pl ${c?'tag '+c:''}" style="top:${y-108}px">${s?`<span class="lab">${s}</span>`:''}${t}</div>`));
for(let m=18*60+30;m<=23*60+30;m+=15){const t=Math.floor(m/60)+':'+String(m%60).padStart(2,'0');document.getElementById('ticks').insertAdjacentHTML('beforeend',`<span>${m%60?t:'<b>'+t+'</b>'}</span>`)}
// watch list
const flag=(a,b)=>`<circle cx="11" cy="5" r="4.500" fill="${b}"/><path d="M11 .5a4.500 4.500 0 0 0 0 9z" fill="#fff" opacity=".75"/><circle cx="6" cy="10" r="5.500" fill="${a}" stroke="#0f0f0f" stroke-width=".8"/>`;
const num=(n,c)=>`<circle cx="8" cy="8" r="8" fill="${c}"/><text x="8" y="10.500" font-size="7" font-weight="700" fill="#fff" text-anchor="middle">${n}</text>`;
const ring='<circle cx="6" cy="10" r="2.800" fill="none" stroke="#cdbb50" stroke-width=".7" stroke-dasharray="1 1"/>',us='<path d="M11 1.500h3.500M11 4h4.500M11 6.500h4" stroke="#d64052" stroke-width=".9"/><path d="M8 1.500h3v3.500H7z" fill="#2f5fb8"/>';
const us2='<path d="M1 11h10M2 13.500h8M6 8.500h5" stroke="#d33448"/><path d="M2 6h4v4H1z" fill="#2f5fb8"/>',uk='<path d="M6 5v10M1 10h10" stroke="#fff" stroke-width="2.500"/><path d="M6 5v10M1 10h10" stroke="#d33448" stroke-width="1.200"/>';
[['EURJPY','185,4<i class="d">2</i>','0,195','0,11%',flag('#2461b5','#d8406c')+ring,'u'],['EURUSD','<i class="d">1,1639</i>','−0,000','−0,03%',flag('#2461b5','#e7e7ef')+us+ring,'d'],['GBPUSD','1,3424','0,0003','0,03%',flag('#3c57a8','#e7e7ef')+us+uk,'u'],['JPN225','54.4<i class="u">85</i>','469,15','0,87%',num(225,'#215c98'),'u'],['USDCAD','1,389<i class="d">5</i>','0,0010','0,08%',flag('#e3e6ee','#d8404c')+us2,'u'],['NAS100','25.745','−13,08','−0,05%',num(100,'#22a0b8'),'d'],['US30','49.09<i class="d">5</i>','−78,65','−0,16%',num(30,'#28a6c8'),'d'],['XAUUSD','<i class="d">4.618,3</i>','32,305','0,70%','<use href="#gold"/>','u'],['BTCUSD','95.1<i class="d">58</i>','703,96','0,75%','<circle cx="8" cy="8" r="8" fill="#e58a23"/><text x="8" y="11.500" font-size="10" font-weight="700" fill="#fff" text-anchor="middle">₿</text>','u']]
.forEach(([s,l,c,p,ic,k])=>document.getElementById('rows').insertAdjacentHTML('beforeend',`<tr class="${s=='XAUUSD'?'sel':''}"><td><svg width="16" height="16">${ic}</svg></td><td>${s}</td><td><div class="overflow-hidden">${l}</div></td><td class="r ${k}">${c}</td><td class="r ${k}">${p}</td><td></td></tr>`));
</script>
<script src="https://cdn.jsdelivr.net/npm/bootstrap@5.3.0/dist/js/bootstrap.bundle.min.js"></script>
</body>
</html>
